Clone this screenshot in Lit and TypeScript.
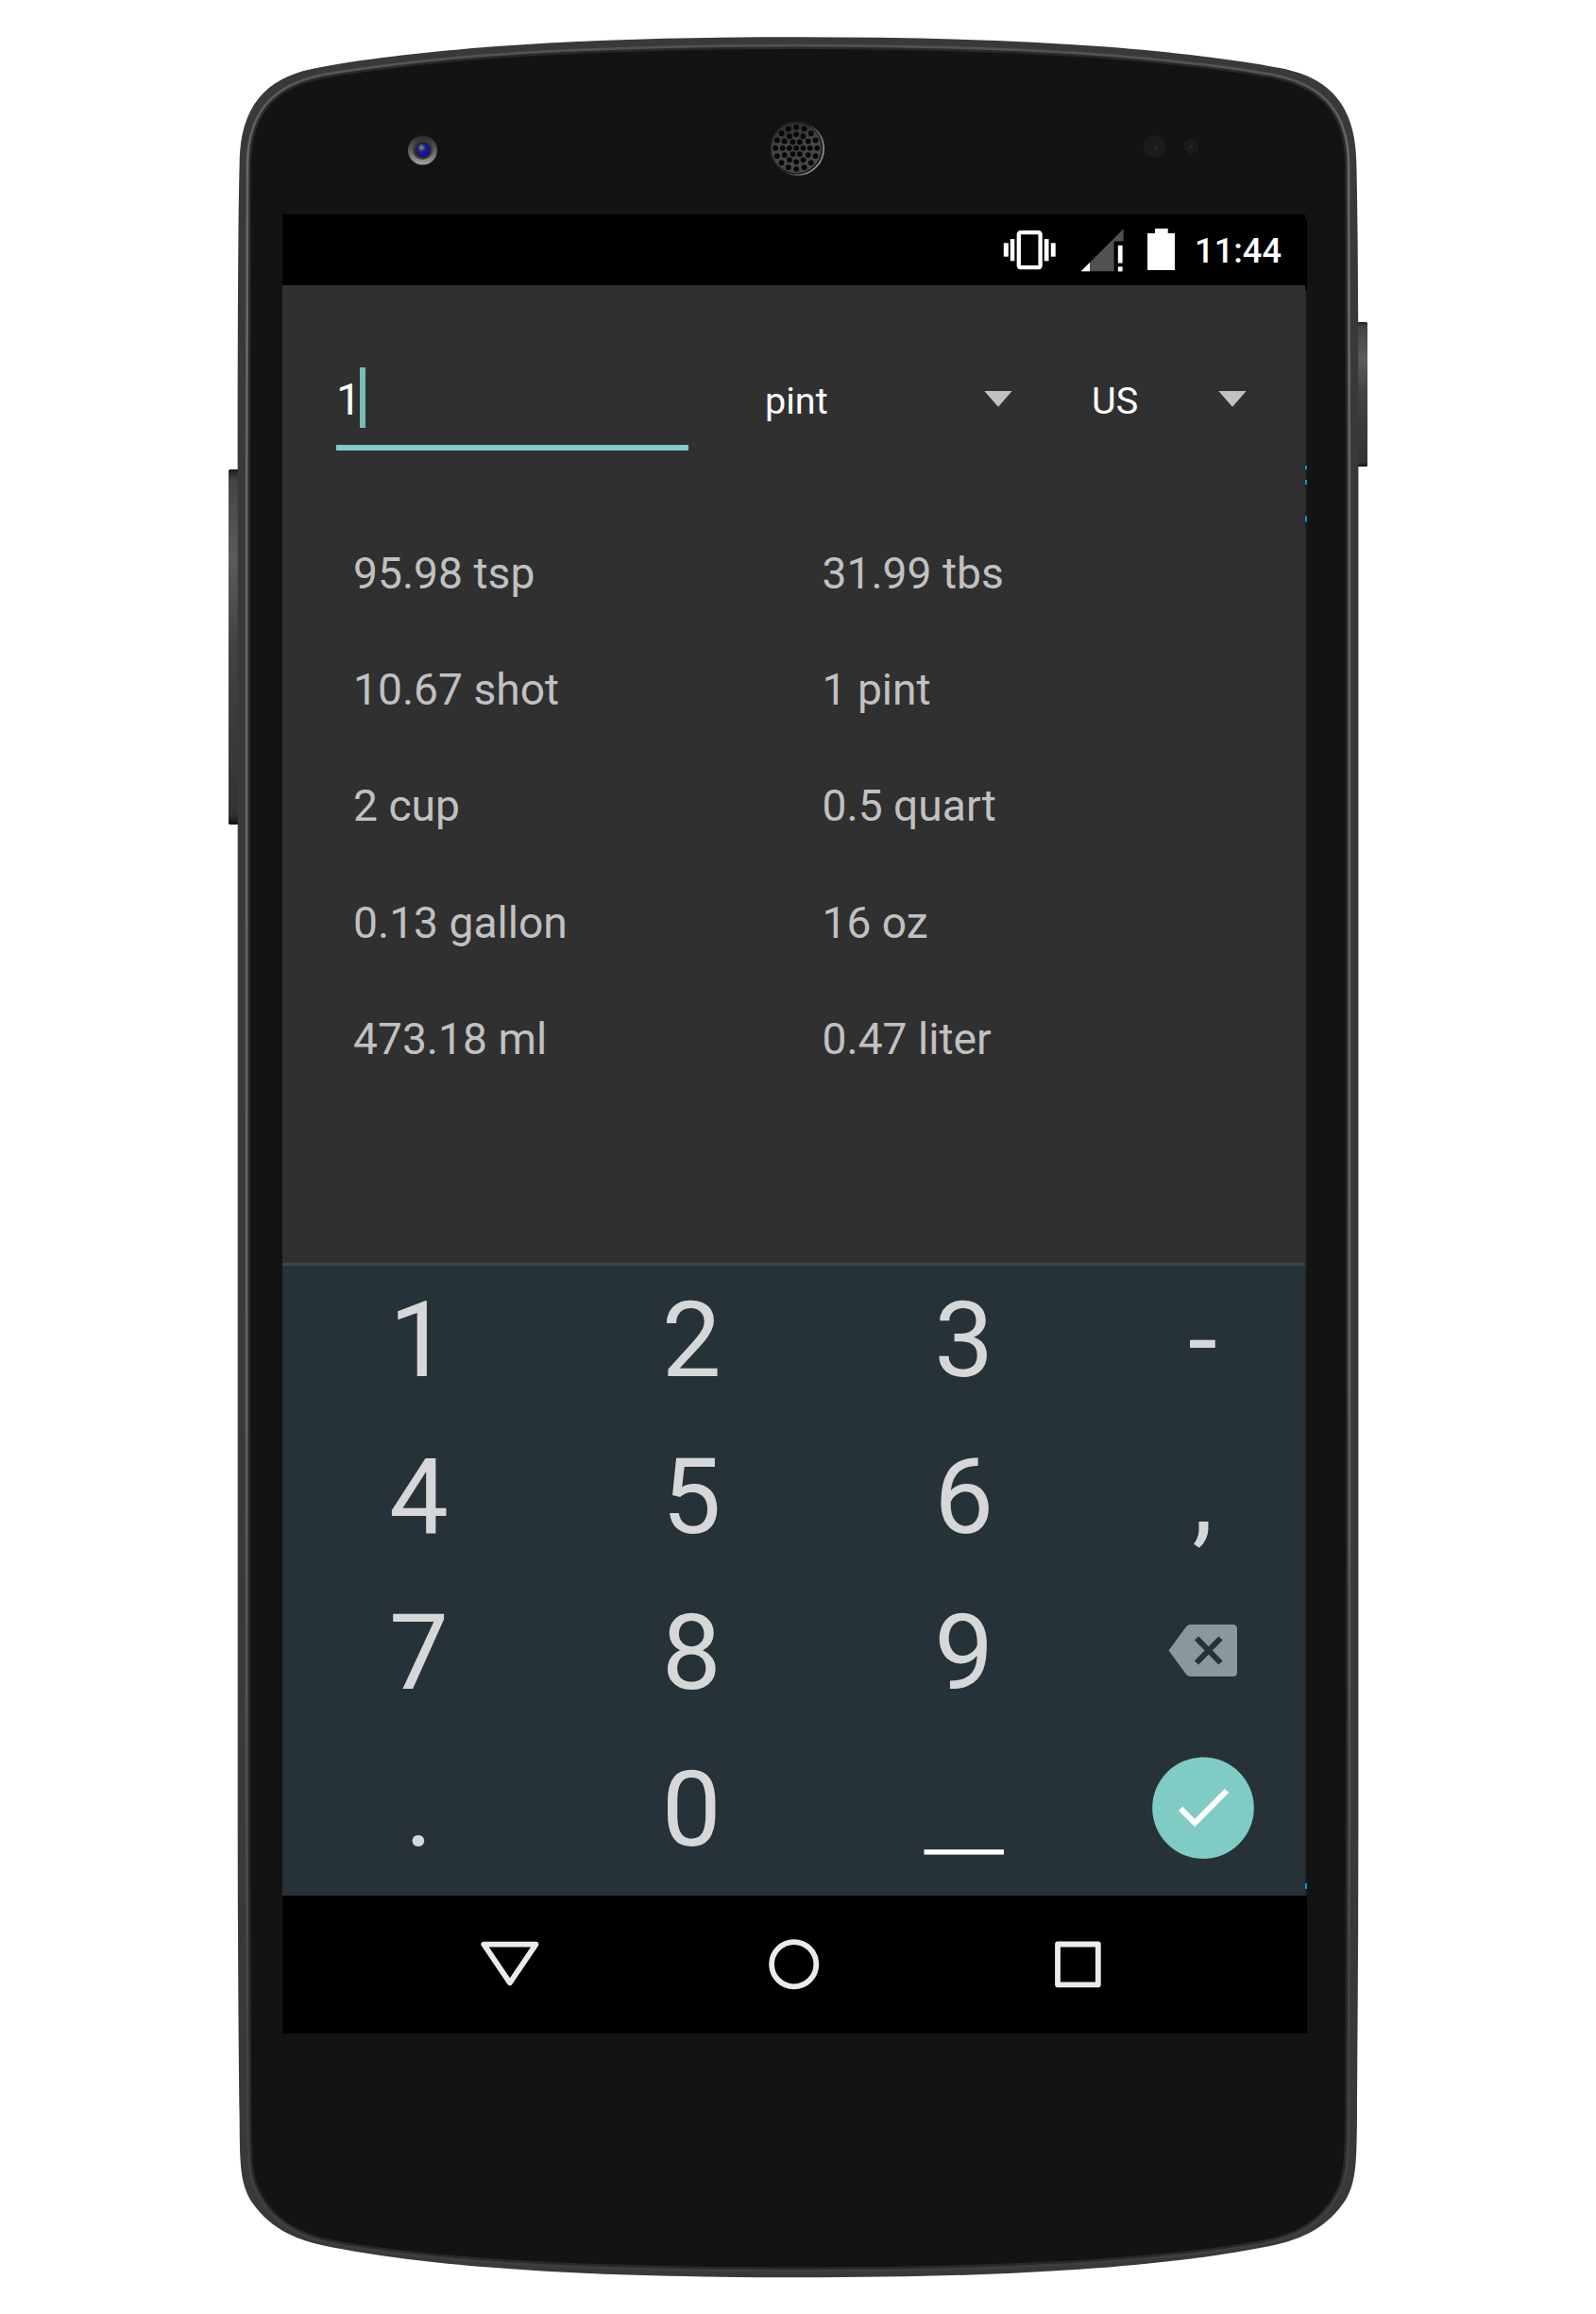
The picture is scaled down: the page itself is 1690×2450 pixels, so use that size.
import { LitElement, html, svg, css } from "lit";
import { customElement, property } from "lit/decorators.js";

/** Phone shell: casing, side buttons, camera, earpiece and sensors. */
@customElement("phone-shell")
class PhoneShell extends LitElement {
  static styles = css`
    :host { display: block; width: 1690px; height: 2450px; }
    .shell { display: block; }
  `;

  private ring(count: number, radius: number) {
    return Array.from({ length: count }, (_, i) => {
      const a = (i / count) * Math.PI * 2;
      return svg`<circle cx=${843.2 + Math.cos(a) * radius} cy=${156.8 + Math.sin(a) * radius} r="2.9"/>`;
    });
  }

  render() {
    const outer =
      "M845 39.3C950 39.3 1060 41.5 1171 49.5C1240 55 1310 63 1352 71.5C1404 80 1436.4 108 1436.4 175C1438 240 1438.4 350 1438.4 500V1900C1438.4 2050 1437.5 2150 1437 2240C1436.5 2290 1436 2310 1425 2329C1407 2357 1380 2371 1345 2378C1240 2399 1090 2411.3 845 2411.3C600 2411.3 450 2399 345 2378C310 2371 283 2357 265 2329C254 2310 254 2290 253.6 2240C252.5 2150 251.7 2050 251.7 1900V500C251.7 350 252 240 253.6 175C253.6 108 286 80 338 71.5C380 63 450 55 519 49.5C630 41.5 740 39.3 845 39.3Z";
    const inner =
      "M845 50.7C940 50.7 1040 53 1139 58.7C1210 63 1290 72 1337 80C1392 88 1425.4 113 1425.4 175C1426 240 1426.2 350 1426.2 500V1900C1426.2 2050 1426 2150 1425.4 2240C1425 2290 1424 2308 1413 2325C1398 2352 1370 2367 1337 2373C1240 2391 1090 2401.7 845 2401.7C600 2401.7 450 2391 353 2373C320 2367 292 2352 277 2325C266 2308 265.5 2290 265 2240C264.3 2150 263.8 2050 263.8 1900V500C263.8 350 264 240 264.7 175C264.7 113 298 88 353 80C400 72 480 63 551 58.7C650 53 750 50.7 845 50.7Z";
    return html`
      <svg class="shell" width="1690" height="2450" viewBox="0 0 1690 2450">
        <defs>
          <linearGradient id="btn" x1="0" y1="0" x2="0" y2="1">
            <stop offset="0" stop-color="#1c1c1c"/><stop offset=".03" stop-color="#444"/>
            <stop offset=".25" stop-color="#5c5c5c"/><stop offset=".5" stop-color="#424242"/>
            <stop offset=".97" stop-color="#333"/><stop offset="1" stop-color="#111"/>
          </linearGradient>
          <linearGradient id="edge" x1="0" y1="0" x2="0" y2="1">
            <stop offset="0" stop-color="#515155"/><stop offset=".05" stop-color="#666669"/>
            <stop offset=".6" stop-color="#626266"/><stop offset=".9" stop-color="#434344"/>
            <stop offset="1" stop-color="#3e3e3e"/>
          </linearGradient>
          <linearGradient id="cam" x1="0" y1="0" x2="0" y2="1">
            <stop offset="0" stop-color="#2a2a2a"/><stop offset=".5" stop-color="#5d5d5b"/>
            <stop offset="1" stop-color="#a2a2a2"/>
          </linearGradient>
          <radialGradient id="lens" cx=".38" cy=".35" r=".75">
            <stop offset="0" stop-color="#8294a0"/><stop offset=".4" stop-color="#20266a"/>
            <stop offset=".8" stop-color="#1408c4"/><stop offset="1" stop-color="#1a1050"/>
          </radialGradient>
          <linearGradient id="mesh" x1="0" y1="0" x2=".3" y2="1">
            <stop offset="0" stop-color="#262626"/><stop offset=".5" stop-color="#444"/>
            <stop offset="1" stop-color="#474747"/>
          </linearGradient>
          <linearGradient id="rim" x1="0" y1="0" x2="1" y2=".5">
            <stop offset=".6" stop-color="#222"/><stop offset="1" stop-color="#999"/>
          </linearGradient>
        </defs>
        <rect x="242" y="497" width="14" height="376" rx="1.5" fill="url(#btn)"/>
        <rect x="1434" y="341" width="14" height="153" rx="1.5" fill="url(#btn)"/>
        <path d=${outer} fill="#39393a"/>
        <path d=${inner} fill="#131313" stroke="url(#edge)" stroke-width="8"/>
        <path d=${inner} fill="#131313" stroke="#29292b" stroke-width="2.5"/>

        <circle cx="447.5" cy="159" r="15.5" fill="url(#cam)"/>
        <circle cx="447.5" cy="158.5" r="10.5" fill="#3a3936"/>
        <circle cx="447.8" cy="158.5" r="8" fill="#222"/>
        <circle cx="448" cy="158.5" r="7" fill="url(#lens)"/>

        <circle cx="844.2" cy="157.2" r="28" fill="#1a1a1a" stroke="url(#rim)" stroke-width="1.6"/>
        <circle cx="843.2" cy="156.8" r="26.5" fill="url(#mesh)"/>
        <g fill="#070707">
          <circle cx="843.2" cy="156.8" r="2.9"/>
          ${this.ring(6, 7.3)}${this.ring(12, 14.5)}${this.ring(16, 22)}
        </g>

        <circle cx="1222.5" cy="155" r="12" fill="#1b1b1b"/>
        <circle cx="1224.5" cy="157" r="2.2" fill="#35221a"/>
        <circle cx="1261.5" cy="155" r="8" fill="#1b1b1b"/>
        <circle cx="1261.5" cy="155.5" r="2" fill="#39221a"/>

        <path d="M1382 233h2v74h-2zM1382 2008h2v145h-2z" fill="#000"/>
        <path d="M1382 307h2v1701h-2z" fill="#1d1f20"/>
        <path d="M1382 493h2v4h-2zM1382 508h2v5h-2zM1382 546.5h2v6h-2zM1382 1994h2v6h-2z" fill="#0099cc"/>
      </svg>`;
  }
}

@customElement("status-bar")
class StatusBar extends LitElement {
  static styles = css`
    :host { display: flex; height: 75px; background: #000; color: #fff; justify-content: flex-end; padding-right: 23px; }
    .icons { display: block; margin-right: 20px; }
    .time { font: 500 36.3px/78px Roboto, sans-serif; width: 94px; white-space: nowrap; }
  `;
  render() {
    return html`
      <svg class="icons" width="190" height="75" viewBox="1055 227 190 75">
        <g fill="#fff">
          <rect x="1078.8" y="246.2" width="22.8" height="37" rx="2" fill="none" stroke="#fff" stroke-width="4.3"/>
          <rect x="1062.8" y="257.3" width="5" height="14.4"/><rect x="1069.8" y="253" width="4.5" height="23.3"/>
          <rect x="1105.8" y="253" width="4.7" height="23.3"/><rect x="1112.8" y="257.3" width="4.9" height="14.4"/>
          <path d="M1144.7 287.3L1189.7 242.3V255.5H1179.6V287.3Z" fill="#515151"/>
          <path d="M1144.7 287.3L1154 278V287.3Z"/>
          <rect x="1183.8" y="259.8" width="4.8" height="18.8"/><rect x="1183.8" y="282.4" width="4.8" height="5"/>
          <path d="M1215 247H1223V242H1236.7V247H1244V286H1215Z"/>
        </g>
      </svg>
      <span class="time">11:44</span>`;
  }
}

@customElement("unit-select")
class UnitSelect extends LitElement {
  @property() value = "";
  static styles = css`
    :host { display: flex; justify-content: space-between; color: #fff; font: 400 39.6px/71.5px Roboto, sans-serif; }
    .arrow { display: block; margin-top: 24.5px; }
  `;
  render() {
    return html`<span>${this.value}</span>
      <svg class="arrow" width="30" height="17" viewBox="0 0 30 17"><path d="M0.3 0H29.7L15 16.8Z" fill="#c1c1c1"/></svg>`;
  }
}

@customElement("number-pad")
class NumberPad extends LitElement {
  static styles = css`
    :host {
      display: grid; height: 670px; box-sizing: border-box;
      grid-template-columns: 289px 288.5px 288.5px 217px;
      grid-auto-rows: 165.7px;
      background: linear-gradient(#37474f 0 3px, #263238 3px);
      color: #d5d7d8;
    }
    .key { display: flex; justify-content: center; font: 400 112px/164px Roboto, sans-serif; }
    .side { padding-left: 0; }
    .glyph { display: block; }
  `;
  private face(key: string) {
    if (key === "delete")
      return html`<svg class="glyph" width="120" height="164" viewBox="1214 1668 120 164">
        <path d="M1261 1720H1305.5Q1310 1720 1310 1724.5V1770.5Q1310 1775 1305.5 1775H1261Q1257.5 1775 1255.5 1772L1237.5 1747.5L1255.5 1723Q1257.5 1720 1261 1720Z" fill="#8c979c"/>
        <path d="M1267 1734.5L1292.5 1760.5M1292.5 1734.5L1267 1760.5" stroke="#263238" stroke-width="6"/></svg>`;
    if (key === "enter")
      return html`<svg class="glyph" width="120" height="164" viewBox="1214 1834 120 164">
        <circle cx="1274" cy="1914.2" r="53.8" fill="#80cbc4"/>
        <path d="M1250 1914.8L1265.2 1930L1299 1896" fill="none" stroke="#fff" stroke-width="6"/></svg>`;
    if (key === "space")
      return html`<svg class="glyph" width="120" height="164" viewBox="961 1834 120 164">
        <rect x="978.5" y="1958.2" width="84.5" height="5.4" fill="#fff"/></svg>`;
    return key;
  }
  render() {
    const rows = [["1", "2", "3", "-"], ["4", "5", "6", ","], ["7", "8", "9", "delete"], [".", "0", "space", "enter"]];
    return rows.map((r) => r.map((k, i) => html`<div class="key ${i === 3 ? "side" : ""}">${this.face(k)}</div>`));
  }
}

@customElement("nav-bar")
class NavBar extends LitElement {
  static styles = css`
    :host { display: flex; justify-content: center; height: 146px; background: #000; }
    .icons { display: block; }
  `;
  render() {
    return html`<svg class="icons" width="1083" height="146" viewBox="299 2007 1083 146" fill="none" stroke="#ebebeb" stroke-width="5.8" stroke-linejoin="round">
      <path d="M512.3 2058.6H567.5L539.9 2099.3Z"/>
      <circle cx="840.7" cy="2079.7" r="23.6"/>
      <rect x="1120" y="2058.5" width="42.8" height="42.8"/>
    </svg>`;
  }
}

@customElement("app-root")
class AppRoot extends LitElement {
  static styles = css`
    :host { display: block; width: 1690px; height: 2450px; background: #fff; overflow: hidden; }
    .stage { display: grid; }
    .stage > * { grid-area: 1 / 1; }
    .screen { display: flex; flex-direction: column; width: 1083px; height: 1926px; margin: 227px 0 0 299px; background: #303030; z-index: 1; }
    .content { flex: 1; box-sizing: border-box; padding: 87px 0 0 57px; }
    .controls { display: flex; }
    .amount { display: flex; box-sizing: border-box; width: 373.3px; height: 88px; border-bottom: 6.5px solid #80cbc4; color: #fff; font: 400 47px/68px Roboto, sans-serif; }
    .caret { width: 6px; height: 64px; margin-left: -1.5px; background: #78bdb7; }
    .unit { width: 262.5px; margin-left: 80.7px; }
    .system { width: 163.6px; margin-left: 83.5px; }
    .results { display: grid; grid-template-columns: 496.5px 1fr; grid-auto-rows: 123.4px; margin: 68.5px 0 0 18px; color: #c1c1c1; font: 400 46.2px/123.4px Roboto, sans-serif; }
  `;
  private results = [
    "95.98 tsp", "31.99 tbs", "10.67 shot", "1 pint", "2 cup",
    "0.5 quart", "0.13 gallon", "16 oz", "473.18 ml", "0.47 liter",
  ];
  render() {
    return html`<div class="stage">
      <phone-shell></phone-shell>
      <main class="screen">
        <status-bar></status-bar>
        <section class="content">
          <div class="controls">
            <div class="amount"><span>1</span><span class="caret"></span></div>
            <unit-select class="unit" value="pint"></unit-select>
            <unit-select class="system" value="US"></unit-select>
          </div>
          <div class="results">${this.results.map((r) => html`<span>${r}</span>`)}</div>
        </section>
        <number-pad></number-pad>
        <nav-bar></nav-bar>
      </main>
    </div>`;
  }
}
